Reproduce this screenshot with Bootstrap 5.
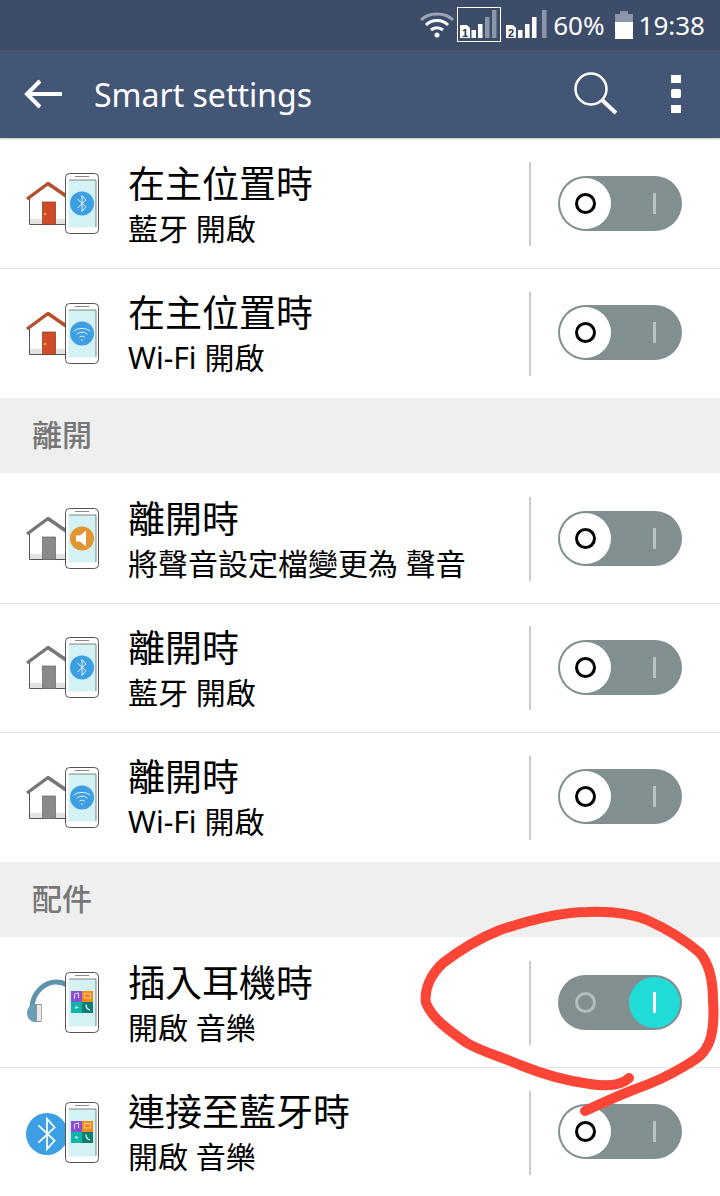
<!DOCTYPE html>
<html lang="zh-Hant">
<head>
<meta charset="utf-8">
<title>Smart settings</title>
<link href="https://cdn.jsdelivr.net/npm/bootstrap@5.3.0/dist/css/bootstrap.min.css" rel="stylesheet">
<style>
html,body{height:1196px;overflow:hidden;background:#fff}
body{font-family:"Noto Sans","Noto Sans CJK TC",sans-serif;color:#000;position:relative}
.stat-bar{height:50px;background:#3c4c69;color:#fff;font-size:26px;line-height:50px;padding-right:15px}
.stat-wifi{margin-right:3px}
.stat-pct{margin-left:6px}
.stat-batt{margin:0 6px 0 10px}
.sim-num{font-family:"Liberation Sans",sans-serif;font-size:11px;font-weight:700;fill:#26324a}
.app-bar{height:88px;background:#445675;color:#fff;padding:0;margin-bottom:2px;box-shadow:0 1px 2px rgba(0,0,0,.25)}
.back-ico{margin-top:-1px}
.app-title{font-size:32px;line-height:88px;margin-left:30px;padding-top:2px}
.find-ico{margin-right:53px}
.more-ico{margin-right:39px}
.set-row{height:129px;padding:0 38px 0 26px;border-color:#e4e4e4;color:#000}
.set-row.no-line{border-bottom:0}
.row-ico{width:74px;height:64px;flex:none;margin-right:28px}
.row-text{flex:1 1 auto;min-width:0}
.row-title{font-family:"Noto Sans CJK TC",sans-serif;font-size:37px;line-height:46px}
.row-sub{font-family:"Noto Sans","Noto Sans CJK TC",sans-serif;font-size:30px;line-height:42px;margin-top:3px;white-space:nowrap}
.row-div{width:2px;height:84px;background:#c9cbcb;flex:none;margin-right:27px}
.tgl{width:124px;height:55px;border-radius:28px;background:#828f91;flex:none;position:relative;margin-bottom:2px}
.tgl-knob{position:absolute;top:2px;left:2px;width:51px;height:51px;border-radius:50%;background:#fff}
.tgl.on .tgl-knob{left:71px;background:#1fdcd6}
.tgl-o{position:absolute;left:17px;top:17px;width:21px;height:21px;border-radius:50%;border:3px solid #000}
.tgl-i{position:absolute;left:95px;top:17px;width:3px;height:21px;background:#b9c1c2}
.tgl.on .tgl-o{border-color:#b4bcbd}
.tgl.on .tgl-i{background:#fff}
.sec-head{height:75px;margin-bottom:2px;background:#efefef;color:#777;font-family:"Noto Sans CJK TC",sans-serif;font-weight:500;font-size:30px;line-height:71px;padding-left:32px}
.scribble{position:absolute;left:0;top:0;pointer-events:none}
</style>
</head>
<body>
<svg width="0" height="0" class="d-block">
<defs>
<g id="phone">
<rect x="39.5" y="1.5" width="33" height="60" rx="4" fill="#fff" stroke="#555" stroke-width="1"/>
<rect x="42.5" y="8" width="27.5" height="47.5" fill="#d4f1f3"/>
<path d="M43 8h27M70 8v47" stroke="#555" stroke-width=".7"/>
<path d="M49 4.500h14" stroke="#888" stroke-width="1"/>
</g>
<g id="house-red">
<path d="M3.500 26V52.500H40V22L21.500 13z" fill="#fff" stroke="#555" stroke-width="1"/>
<rect x="4" y="47" width="36" height="5" fill="#e2e2e2"/>
<rect x="16.500" y="30" width="13" height="22.500" fill="#cf4c26" stroke="#7d3a22" stroke-width=".7"/>
<rect x="18" y="41" width="2" height="2" fill="#f2b632"/>
<path d="M1 27L22 11.500 40 24" fill="none" stroke="#b5502f" stroke-width="3.400" stroke-linejoin="round"/>
</g>
<g id="house-gray">
<path d="M3.500 26V52.500H40V22L21.500 13z" fill="#fff" stroke="#555" stroke-width="1"/>
<rect x="4" y="47" width="36" height="5" fill="#e2e2e2"/>
<rect x="16.500" y="30" width="13" height="22.500" fill="#8a8a8a" stroke="#666" stroke-width=".7"/>
<path d="M1 27L22 11.500 40 24" fill="none" stroke="#777" stroke-width="3.400" stroke-linejoin="round"/>
</g>
<g id="bt-mark"><path d="M-4.500-4.500L4 3.500 0 8V-8L4-3.500-4.500 4.500" fill="none" stroke="#fff" stroke-width=".9"/></g>
<g id="wifi-mark" fill="none" stroke="#fff" stroke-width=".9" stroke-linecap="round"><path d="M-8-2.500C-4-6 4-6 8-2.500M-5 .5C-2.500-2 2.500-2 5 .5M-2.500 3.500C-1 2.300 1 2.300 2.500 3.500"/><circle cy="6.500" r=".8" fill="#fff" stroke="none"/></g>
<g id="bt-badge"><circle cx="56" cy="31.500" r="12" fill="#3d9fe3"/><use href="#bt-mark" x="56" y="31.500"/></g>
<g id="wifi-badge"><circle cx="56" cy="31.500" r="12" fill="#3d9fe3"/><use href="#wifi-mark" x="56" y="31.500"/></g>
<g id="apps">
<rect x="45" y="20" width="11" height="11" fill="#8a4fd8"/><rect x="56" y="20" width="11" height="11" fill="#f28a1e"/>
<rect x="45" y="31" width="11" height="11" fill="#0eb5a8"/><rect x="56" y="31" width="11" height="11" fill="#0c7f72"/>
<path d="M48.500 28v-5l4-1v5" fill="none" stroke="#fff" stroke-width=".8"/>
<rect x="58.500" y="22.500" width="6" height="4.500" fill="none" stroke="#ffd9a8" stroke-width=".8"/>
<path d="M49.500 35l3 1.500-3 1.500z" fill="#fff"/>
<path d="M60 33.500c0 3 1.500 5 4 5.500" fill="none" stroke="#fff" stroke-width="1.200"/>
</g>
</defs>
</svg>

<div class="stat-bar d-flex justify-content-end align-items-center">
  <svg width="34" height="28" viewBox="0 0 34 28" class="stat-wifi">
    <path d="M1 9C9 1 25 1 33 9" fill="none" stroke="#9aa5b8" stroke-width="3"/>
    <path d="M6 14C12 8 22 8 28 14M11 19C14.500 16 19.500 16 23 19" fill="none" stroke="#fff" stroke-width="3"/>
    <circle cx="17" cy="24" r="2.500" fill="#fff"/>
  </svg>
  <svg width="90" height="36" viewBox="0 0 90 36">
    <rect x=".5" y=".5" width="43" height="34" fill="none" stroke="#fff"/>
    <path d="M3 18h7l3 3v10H3z" fill="#fff"/>
    <text class="sim-num" x="5" y="30">1</text>
    <rect x="14.500" y="23" width="4.500" height="8" fill="#fff"/><rect x="21" y="17" width="4.500" height="14" fill="#fff"/><rect x="28" y="10" width="4.500" height="21" fill="#8b96aa"/><rect x="35" y="3" width="4.500" height="28" fill="#8b96aa"/>
    <path d="M49 18h7l3 3v10H49z" fill="#fff"/>
    <text class="sim-num" x="51" y="30">2</text>
    <rect x="61" y="23" width="4.500" height="8" fill="#fff"/><rect x="68" y="17" width="4.500" height="14" fill="#fff"/><rect x="75" y="10" width="4.500" height="21" fill="#fff"/><rect x="85" y="3" width="4.500" height="28" fill="#8b96aa"/>
  </svg>
  <span class="stat-pct">60%</span>
  <svg width="18" height="28" viewBox="0 0 18 28" class="stat-batt"><path d="M5 0h8v3h5v25H0V3h5z" fill="#8b96aa"/><rect y="11" width="18" height="17" fill="#fff"/></svg>
  <span>19:38</span>
</div>

<nav class="navbar app-bar flex-nowrap justify-content-start">
  <svg width="40" height="32" viewBox="0 0 40 32" class="ms-4 back-ico"><path d="M38 16H3M16 3L3 16l13 13" fill="none" stroke="#fff" stroke-width="4"/></svg>
  <span class="app-title flex-grow-1">Smart settings</span>
  <svg width="46" height="46" viewBox="0 0 46 46" class="find-ico"><circle cx="19" cy="18" r="15.500" fill="none" stroke="#fff" stroke-width="2.500"/><path d="M30 29l14 13" stroke="#fff" stroke-width="4"/></svg>
  <svg width="10" height="38" viewBox="0 0 10 38" class="more-ico"><rect width="10" height="8" fill="#fff"/><rect y="14" width="10" height="9" rx="2" fill="#fff"/><rect y="30" width="10" height="8" fill="#fff"/></svg>
</nav>

<div class="list-group list-group-flush">
  <div class="list-group-item set-row d-flex align-items-center">
    <svg class="row-ico" viewBox="0 0 74 64"><use href="#house-red"/><use href="#phone"/><use href="#bt-badge"/></svg>
    <div class="row-text"><div class="row-title">在主位置時</div><div class="row-sub">藍牙 開啟</div></div>
    <div class="row-div"></div>
    <div class="tgl"><span class="tgl-i"></span><span class="tgl-knob"></span><span class="tgl-o"></span></div>
  </div>
  <div class="list-group-item set-row no-line d-flex align-items-center">
    <svg class="row-ico" viewBox="0 0 74 64"><use href="#house-red"/><use href="#phone"/><use href="#wifi-badge"/></svg>
    <div class="row-text"><div class="row-title">在主位置時</div><div class="row-sub">Wi-Fi 開啟</div></div>
    <div class="row-div"></div>
    <div class="tgl"><span class="tgl-i"></span><span class="tgl-knob"></span><span class="tgl-o"></span></div>
  </div>
</div>
<div class="sec-head">離開</div>
<div class="list-group list-group-flush">
  <div class="list-group-item set-row d-flex align-items-center">
    <svg class="row-ico" viewBox="0 0 74 64"><use href="#house-gray"/><use href="#phone"/><circle cx="56" cy="31.500" r="12" fill="#e2952f"/><path d="M50 28.500h4l6-5v16l-6-5h-4z" fill="#fff"/></svg>
    <div class="row-text"><div class="row-title">離開時</div><div class="row-sub">將聲音設定檔變更為 聲音</div></div>
    <div class="row-div"></div>
    <div class="tgl"><span class="tgl-i"></span><span class="tgl-knob"></span><span class="tgl-o"></span></div>
  </div>
  <div class="list-group-item set-row d-flex align-items-center">
    <svg class="row-ico" viewBox="0 0 74 64"><use href="#house-gray"/><use href="#phone"/><use href="#bt-badge"/></svg>
    <div class="row-text"><div class="row-title">離開時</div><div class="row-sub">藍牙 開啟</div></div>
    <div class="row-div"></div>
    <div class="tgl"><span class="tgl-i"></span><span class="tgl-knob"></span><span class="tgl-o"></span></div>
  </div>
  <div class="list-group-item set-row no-line d-flex align-items-center">
    <svg class="row-ico" viewBox="0 0 74 64"><use href="#house-gray"/><use href="#phone"/><use href="#wifi-badge"/></svg>
    <div class="row-text"><div class="row-title">離開時</div><div class="row-sub">Wi-Fi 開啟</div></div>
    <div class="row-div"></div>
    <div class="tgl"><span class="tgl-i"></span><span class="tgl-knob"></span><span class="tgl-o"></span></div>
  </div>
</div>
<div class="sec-head">配件</div>
<div class="list-group list-group-flush">
  <div class="list-group-item set-row d-flex align-items-center">
    <svg class="row-ico" viewBox="0 0 74 64"><path d="M6 36C7 20 20 11 30 11c5 0 8 1 11 3" fill="none" stroke="#5e93ac" stroke-width="5"/><path d="M8 33H15V51H8C3 50 1 46 1 42S3 34 8 33z" fill="#6a9fb8"/><rect x="10.500" y="33.500" width="5" height="17" fill="#e9e9e9" stroke="#777" stroke-width=".6"/><use href="#phone"/><use href="#apps"/></svg>
    <div class="row-text"><div class="row-title">插入耳機時</div><div class="row-sub">開啟 音樂</div></div>
    <div class="row-div"></div>
    <div class="tgl on"><span class="tgl-o"></span><span class="tgl-knob"></span><span class="tgl-i"></span></div>
  </div>
  <div class="list-group-item set-row no-line d-flex align-items-center">
    <svg class="row-ico" viewBox="0 0 74 64"><circle cx="21" cy="33" r="21" fill="#3d9fe3"/><g transform="translate(21 33) scale(1.900)"><use href="#bt-mark"/></g><use href="#phone"/><use href="#apps"/></svg>
    <div class="row-text"><div class="row-title">連接至藍牙時</div><div class="row-sub">開啟 音樂</div></div>
    <div class="row-div"></div>
    <div class="tgl"><span class="tgl-i"></span><span class="tgl-knob"></span><span class="tgl-o"></span></div>
  </div>
</div>

<svg class="scribble" width="720" height="1196" viewBox="0 0 720 1196">
  <path d="M629 1078C622 1085 610 1087 590 1084C565 1081 540 1073 520 1065C500 1056 482 1052 467 1043C448 1030 432 1018 426 1003C424 990 430 975 443 963C460 950 480 938 500 930C530 920 560 912 587 912C612 911 630 913 647 920C665 928 685 940 700 953C710 965 713 985 713 1000C714 1015 714 1028 710 1040C705 1055 695 1060 683 1067C665 1078 650 1084 633 1090C615 1097 600 1104 585 1111" fill="none" stroke="#fb4637" stroke-width="10" stroke-linecap="round" stroke-linejoin="round"/>
</svg>
<script src="https://cdn.jsdelivr.net/npm/bootstrap@5.3.0/dist/js/bootstrap.bundle.min.js"></script>
</body>
</html>
